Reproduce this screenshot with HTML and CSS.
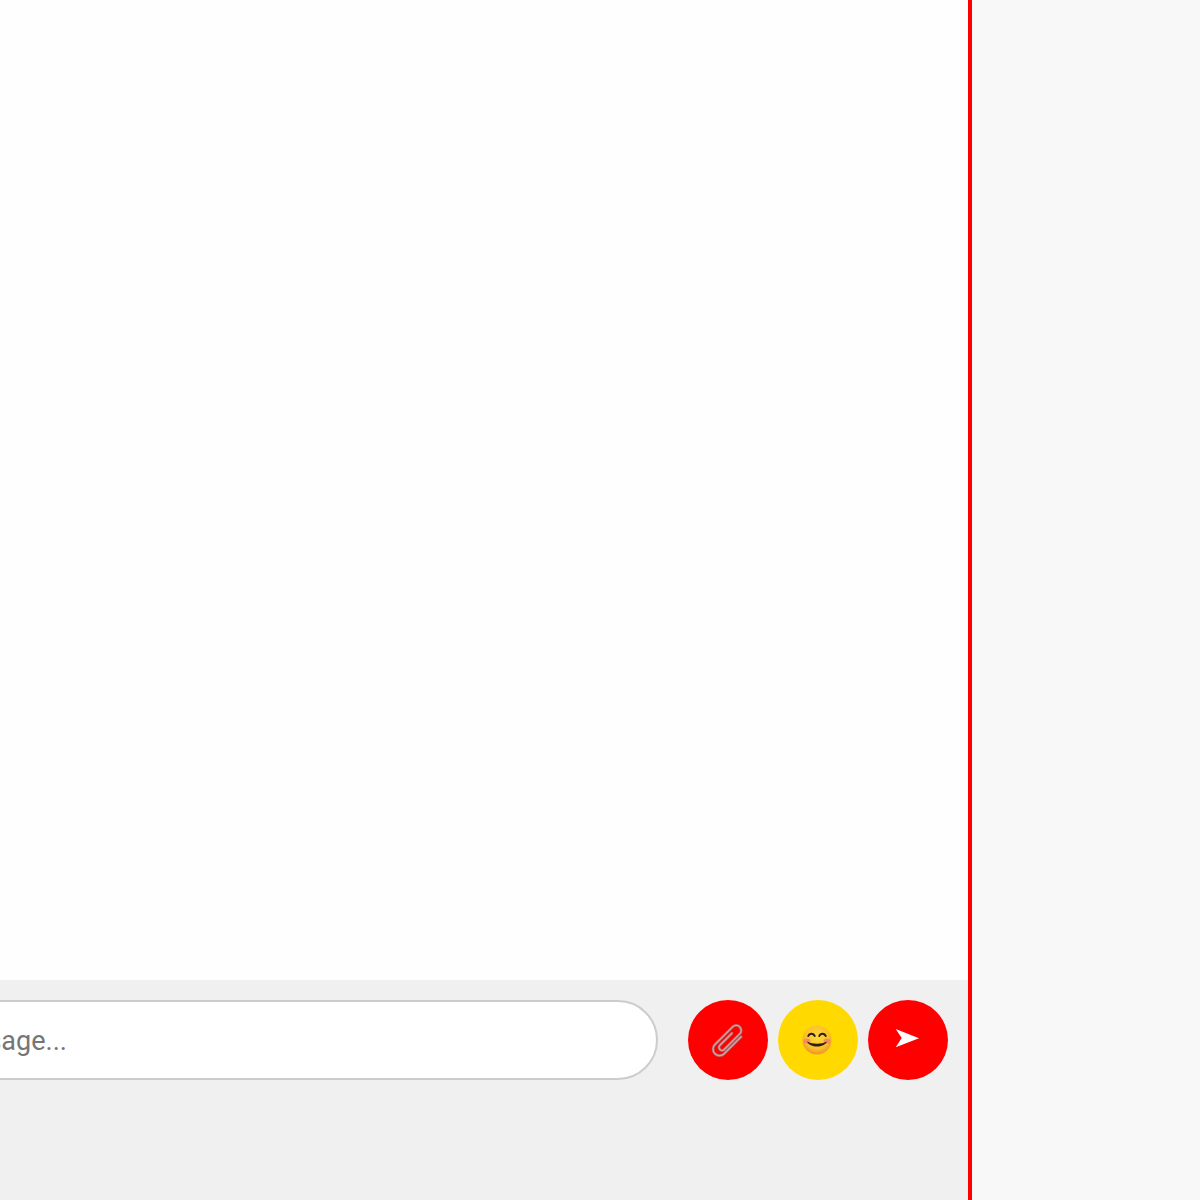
FILE: index.html
```html
<!DOCTYPE html>
<html lang="en">
<head>
<meta charset="utf-8">
<title>Chat</title>
<link rel="stylesheet" href="styles.css">
</head>
<body>
<div class="app">
  <main class="chat">
    <div class="messages"></div>
    <form class="composer">
      <input class="message-input" type="text" placeholder="Type a message...">
      <button class="round-btn attach" type="button" aria-label="Attach">
        <svg class="icon" viewBox="0 0 40 40" width="40" height="40">
          <g transform="translate(19 21) rotate(45)" fill="none" stroke-linecap="round" stroke-linejoin="round">
            <path class="clip-back" d="M7 -13V11A6.5 6.5 0 0 1 -6 11V-14A5 5 0 0 1 4 -14V8A3 3 0 0 1 -2 8V-9"/>
            <path class="clip-front" d="M7 -13V11A6.5 6.5 0 0 1 -6 11V-14A5 5 0 0 1 4 -14V8A3 3 0 0 1 -2 8V-9"/>
          </g>
        </svg>
      </button>
      <button class="round-btn emoji" type="button" aria-label="Emoji">
        <svg class="icon" viewBox="0 0 40 40" width="40" height="40">
          <defs>
            <radialGradient id="face" cx="0.5" cy="0.4" r="0.62">
              <stop offset="0" stop-color="#ffd83a"/>
              <stop offset="0.65" stop-color="#fcc12a"/>
              <stop offset="1" stop-color="#ee8c2e"/>
            </radialGradient>
          </defs>
          <circle cx="19" cy="20" r="14.5" fill="url(#face)"/>
          <ellipse cx="9" cy="21" rx="3.4" ry="2.600" fill="#f27c6a" opacity=".75"/>
          <ellipse cx="29" cy="21" rx="3.4" ry="2.600" fill="#f27c6a" opacity=".75"/>
          <path class="face-line" d="M10.3 16a3.4 3.4 0 0 1 6.4 0M21.3 16a3.4 3.4 0 0 1 6.4 0"/>
          <path class="face-smile" d="M9 21.500c6 3 14 3 20 0c-1.500 3.500-5.500 5-10 5s-8.500-1.500-10-5z"/>
        </svg>
      </button>
      <button class="round-btn send" type="button" aria-label="Send">
        <svg class="icon" viewBox="0 0 40 40" width="40" height="40">
          <polygon points="7.700,9 31,18.300 7.700,27.300 13.700,18" fill="#fff"/>
        </svg>
      </button>
    </form>
  </main>
  <aside class="sidebar"></aside>
</div>
</body>
</html>
```
FILE: styles.css
```css
* { box-sizing: border-box; }
html, body { margin: 0; height: 100%; overflow: hidden; }
body { font-family: Roboto, "Noto Sans", sans-serif; background: #fefefe; }
.app { display: flex; height: 1200px; width: 1200px; }
.chat { width: 968px; flex: none; display: flex; flex-direction: column; overflow: hidden; }
.messages { flex: 1; background: #fefefe; }
.composer { height: 220px; flex: none; background: #f0f0f0; padding: 20px; display: flex; justify-content: flex-end; align-items: flex-start; gap: 10px; }
.message-input { flex: none; width: 840px; height: 80px; margin-right: 20px; padding: 2px 30px 0; border: 2px solid #ccc; border-radius: 40px; background: #fff; font-family: inherit; font-size: 27px; outline: none; }
.message-input::placeholder { color: #757575; }
.round-btn { flex: none; width: 80px; height: 80px; padding: 0; border: 0; border-radius: 50%; display: flex; align-items: center; justify-content: center; }
.icon { display: block; }
.attach, .send { background: #f00; }
.emoji { background: #ffd900; }
.clip-back { stroke: #b56c6c; stroke-width: 2.6; }
.clip-front { stroke: #d2a2a2; stroke-width: 1.2; }
.face-line { fill: none; stroke: #2b2118; stroke-width: 2; stroke-linecap: round; }
.face-smile { fill: #2b2118; }
.sidebar { flex: 1; background: #f8f8f8; border-left: 4px solid #f00; }
```
